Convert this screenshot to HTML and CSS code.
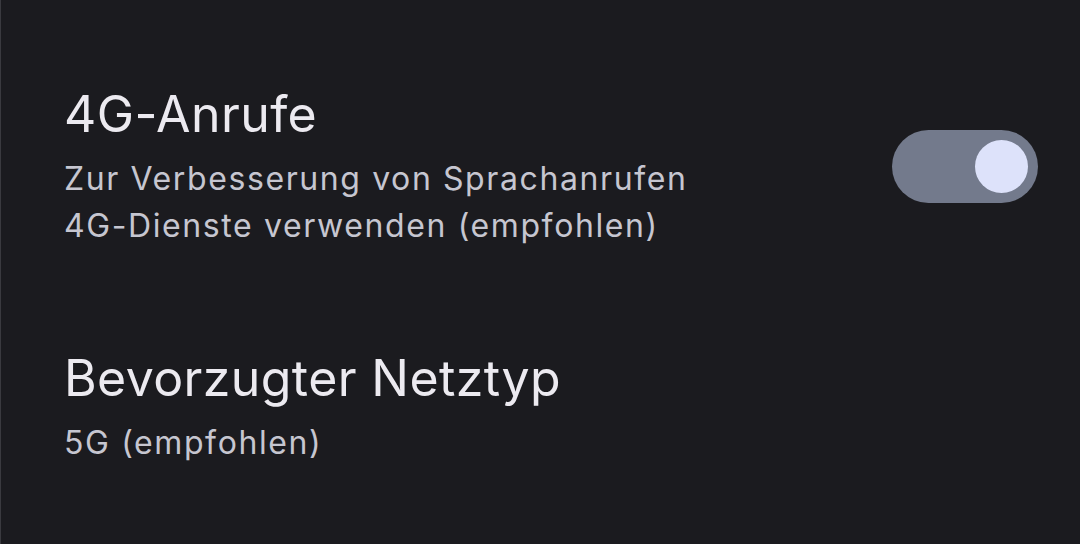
FILE: index.html
```html
<!DOCTYPE html>
<html lang="de">
<head>
<meta charset="utf-8">
<link rel="stylesheet" href="styles.css">
</head>
<body>
<main class="list">
  <div class="item item-switch">
    <div class="text">
      <div class="title">4G-Anrufe</div>
      <div class="summary">Zur Verbesserung von Sprachanrufen<br>4G-Dienste verwenden (empfohlen)</div>
    </div>
    <div class="switch" role="switch" aria-checked="true"><span class="thumb"></span></div>
  </div>
  <div class="item">
    <div class="text">
      <div class="title">Bevorzugter Netztyp</div>
      <div class="summary">5G (empfohlen)</div>
    </div>
  </div>
</main>
</body>
</html>
```
FILE: styles.css
```css
html, body {
  margin: 0;
  padding: 0;
  height: 100%;
  background: #1b1b1f;
}
body {
  font-family: Inter, "Open Sans", sans-serif;
  border-left: 1px solid #3a3a3f;
  box-sizing: border-box;
}
.list {
  display: flex;
  flex-direction: column;
  padding-top: 84px;
  gap: 99px;
}
.item {
  display: flex;
  align-items: center;
  padding: 0 42px 0 63px;
}
.text {
  flex: 1;
}
.title {
  color: #eceaf0;
  font-size: 50px;
  line-height: 60px;
  letter-spacing: 0.4px;
  margin-bottom: 11px;
}
.summary {
  color: #c6c6d0;
  font-size: 32px;
  line-height: 47px;
  letter-spacing: 1.6px;
}
.switch {
  width: 146px;
  height: 73px;
  border-radius: 37px;
  background: #737a8c;
  display: flex;
  align-items: center;
  justify-content: flex-end;
  padding-right: 10px;
  box-sizing: border-box;
}
.thumb {
  width: 53px;
  height: 53px;
  border-radius: 50%;
  background: #dde2fa;
}
```
